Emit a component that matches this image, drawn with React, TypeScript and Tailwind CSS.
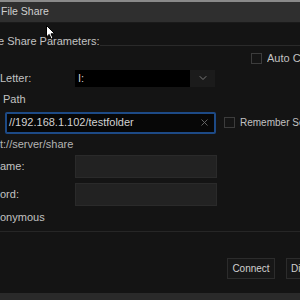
import { ChevronDown, X } from 'lucide-react';

const Checkbox = () => (
  <span className="inline-block h-[11px] w-[11px] shrink-0 border border-[#3c3c3c] bg-[#151515]" />
);

const Field = () => (
  <div className="h-[23px] w-[142px] border border-[#2a2a2a] bg-[#222222]" />
);

export default function App() {
  return (
    <div className="relative h-[300px] w-[300px] overflow-hidden bg-[#141414] font-['Liberation_Sans',Arial,sans-serif] text-[11px] text-[#c2c2c2]">
      {/* title bar */}
      <div className="flex h-[23px] items-center border-t-2 border-[#8a8a8a] border-b border-b-[#1a1a1a] bg-[#2f2f2f] pl-[1px] text-[10.5px] text-[#cfcfcf]">
        File Share
      </div>

      <div className="flex flex-col">
        {/* group header */}
        <div className="mt-[12px] flex items-end">
          <span className="-ml-[2px] leading-[12px]">e Share Parameters:</span>
          <div className="mb-[1px] flex-1 border-b border-[#2a2a2a]" />
        </div>

        <div className="mt-[3px] flex items-center justify-end gap-[5px]">
          <Checkbox />
          <span className="w-[33px] overflow-hidden whitespace-nowrap">Auto Co</span>
        </div>

        {/* drive letter */}
        <div className="mt-[3px] flex items-center">
          <span className="w-[75px]">Letter:</span>
          <div className="flex h-[17px] w-[140px] items-center bg-black">
            <span className="flex-1 pl-[3px] text-[#cfcfcf]">I:</span>
            <span className="flex h-full w-[25px] items-center justify-center bg-[#1b1b1b]">
              <ChevronDown className="h-[12px] w-[12px] text-[#7a7a7a]" strokeWidth={2} />
            </span>
          </div>
        </div>

        <div className="mt-[5px] pl-[3px] leading-[14px]">Path</div>

        {/* path input */}
        <div className="mt-[6px] flex items-center">
          <div className="ml-[5px] flex h-[22px] w-[211px] shrink-0 items-center rounded-[2px] border-2 border-[#1d4a86] bg-[#070707] pl-[2px] pr-[4px]">
            <span className="flex-1 text-[#d2d2d2]">//192.168.1.102/testfolder</span>
            <X className="h-[11px] w-[11px] text-[#6a6a6a]" strokeWidth={2} />
          </div>
          <div className="ml-[8px] flex shrink-0 items-center gap-[5px]">
            <Checkbox />
            <span className="whitespace-nowrap text-[10px]">Remember Se</span>
          </div>
        </div>

        <div className="mt-[3px] leading-[14px] text-[#b5b5b5]">t://server/share</div>

        {/* username */}
        <div className="mt-[4px] flex items-center">
          <span className="w-[75px]">ame:</span>
          <Field />
        </div>
        {/* password */}
        <div className="mt-[5px] flex items-center">
          <span className="w-[75px]">ord:</span>
          <Field />
        </div>

        <div className="mt-[4px] leading-[14px]">onymous</div>

        <div className="mt-[7px] border-b border-[#262626]" />

        {/* buttons */}
        <div className="mt-[26px] flex items-center justify-end gap-[11px]">
          <button className="h-[21px] w-[48px] border border-[#2c2c2c] bg-[#171717] text-[10px] text-[#d0d0d0]">
            Connect
          </button>
          <button className="-mr-[36px] h-[21px] w-[50px] border border-[#2c2c2c] bg-[#171717] pl-[4px] text-left text-[10px] text-[#d0d0d0]">
            Di
          </button>
        </div>

        {/* taskbar strip */}
        <div className="mt-[14px] h-[14px] bg-[#2a2a2a]" />
      </div>

      {/* mouse cursor */}
      <svg className="absolute left-[46px] top-[25px]" width="10" height="15" viewBox="0 0 10 15">
        <path d="M0.5 0.5 L0.5 12 L3.2 9.4 L5.2 14 L7 13.2 L5 8.8 L8.8 8.8 Z" fill="#ffffff" stroke="#000000" strokeWidth="1" />
      </svg>
    </div>
  );
}
